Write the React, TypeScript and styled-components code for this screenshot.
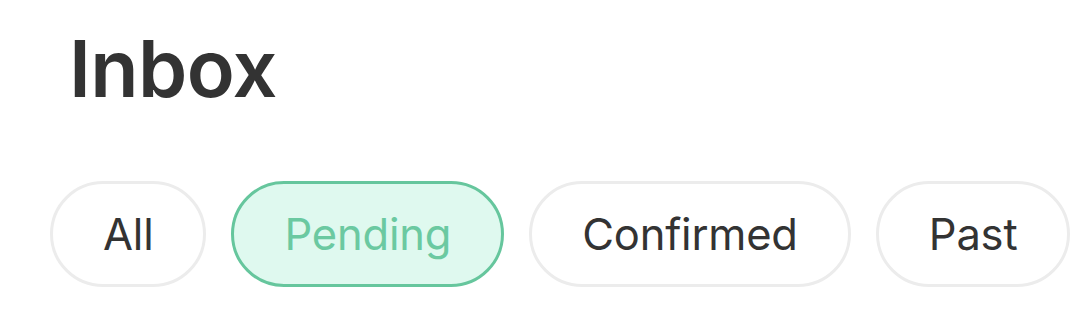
import styled, { createGlobalStyle } from "styled-components";

const GlobalStyle = createGlobalStyle`
  body {
    margin: 0;
    background: #ffffff;
    font-family: Inter, "Noto Sans", sans-serif;
    color: #333333;
  }
`;

const Page = styled.div`
  padding: 18px 50px 0;
  overflow: hidden;
`;

const Title = styled.h1`
  margin: 0 0 0 19px;
  font-size: 79px;
  font-weight: 600;
  line-height: 100px;
  letter-spacing: -0.6px;
  color: #333333;
`;

const Tabs = styled.div`
  display: flex;
  gap: 25px;
  margin-top: 63px;
  width: max-content;
`;

const Tab = styled.button<{ $active?: boolean }>`
  height: 106px;
  padding: 0 50px;
  border-radius: 53px;
  border: 3px solid ${(p) => (p.$active ? "#66c69d" : "#ececec")};
  background: ${(p) => (p.$active ? "#dff9ef" : "#ffffff")};
  color: ${(p) => (p.$active ? "#6bc9a1" : "#333333")};
  font-family: Inter, "Noto Sans", sans-serif;
  font-size: 43.5px;
  font-weight: 400;
  letter-spacing: -0.2px;
  cursor: pointer;
  white-space: nowrap;
`;

const tabs = ["All", "Pending", "Confirmed", "Past"];

const App = () => {
  return (
    <>
      <GlobalStyle />
      <Page>
        <Title>Inbox</Title>
        <Tabs>
          {tabs.map((t) => (
            <Tab key={t} $active={t === "Pending"}>
              {t}
            </Tab>
          ))}
        </Tabs>
      </Page>
    </>
  );
};

export default App;
